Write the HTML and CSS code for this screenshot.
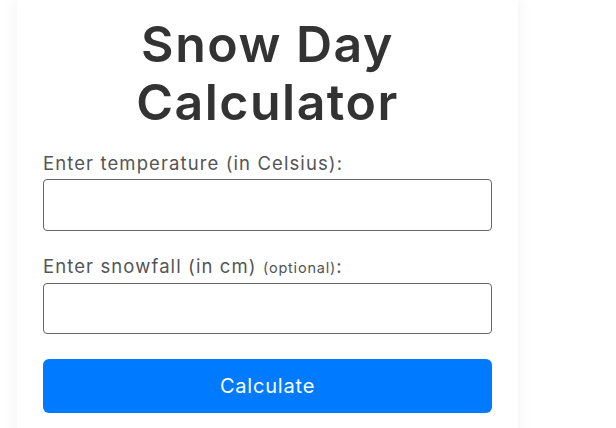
FILE: index.html
```html
<!DOCTYPE html>
<html lang="en">
<head>
  <meta charset="UTF-8" />
  <meta name="viewport" content="width=device-width, initial-scale=1.0"/>
  <title>Snow Day Calculator</title>
  <link rel="stylesheet" href="styles.css">
</head>
<body>
  <div class="calc-container">
    <h1>Snow Day Calculator</h1>
    <form id="snowForm" class="calc-form">
      <div class="field">
        <label for="temp">Enter temperature (in Celsius):</label>
        <input type="number" id="temp" name="temp">
      </div>
      <div class="field">
        <label for="snow">Enter snowfall (in cm) <small>(optional)</small>:</label>
        <input type="number" id="snow" name="snow">
      </div>
      <button type="button">Calculate</button>
    </form>
  </div>
</body>
</html>
```

FILE: styles.css
```css
* { box-sizing: border-box; }
body {
  margin: 0; padding: 0;
  font-family: Inter, 'Noto Sans', sans-serif;
  background: #fff;
  overflow: hidden;
}
.calc-container {
  width: 501px;
  margin-left: 17px;
  padding: 15px 26px 30px;
  background: white;
  box-shadow: 0 0 14px rgba(0,0,0,0.07);
}
h1 {
  margin: 0 0 19px;
  font-size: 50px;
  line-height: 58px;
  font-weight: 600;
  letter-spacing: 1.5px;
  text-align: center;
  color: #333;
}
.calc-form {
  display: flex;
  flex-direction: column;
}
.field {
  display: flex;
  flex-direction: column;
  gap: 2px;
  margin-bottom: 22px;
}
.field + .field {
  margin-bottom: 25px;
}
.field + .field input {
  height: 51px;
}
label {
  font-size: 18.5px;
  line-height: 27px;
  letter-spacing: 1.1px;
  color: #555;
}
label small {
  font-size: 14.5px;
  letter-spacing: 0.8px;
}
input {
  width: 100%;
  height: 52px;
  border: 1px solid #666;
  border-radius: 4px;
  padding: 0 12px;
  font-size: 18px;
}
button {
  height: 54px;
  border: none;
  border-radius: 6px;
  background-color: #007bff;
  color: white;
  font-family: inherit;
  font-size: 20px;
  letter-spacing: 0.8px;
  cursor: pointer;
}
button:hover {
  background-color: #0069d9;
}
```
